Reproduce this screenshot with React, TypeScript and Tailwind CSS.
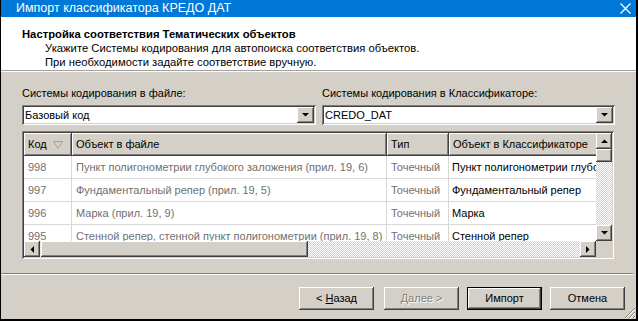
import { ReactNode } from 'react';

const raised =
  'shadow-[inset_-1px_-1px_#404040,inset_1px_1px_#ffffff,inset_-2px_-2px_#808080,inset_2px_2px_#d4d0c8]';
const sunken =
  'shadow-[inset_1px_1px_#808080,inset_-1px_-1px_#ffffff,inset_2px_2px_#404040,inset_-2px_-2px_#d4d0c8]';
const checker =
  'bg-[repeating-conic-gradient(#ffffff_0_25%,#d4d0c8_0_50%)] bg-[length:2px_2px]';

const rows = [
  {
    code: '998',
    file: 'Пункт полигонометрии глубокого заложения (прил. 19, 6)',
    type: 'Точечный',
    cls: 'Пункт полигонометрии глубокого заложения',
  },
  { code: '997', file: 'Фундаментальный репер (прил. 19, 5)', type: 'Точечный', cls: 'Фундаментальный репер' },
  { code: '996', file: 'Марка (прил. 19, 9)', type: 'Точечный', cls: 'Марка' },
  {
    code: '995',
    file: 'Стенной репер, стенной пункт полигонометрии (прил. 19, 8)',
    type: 'Точечный',
    cls: 'Стенной репер',
  },
];

function Arrow({ dir }: { dir: 'up' | 'down' | 'left' | 'right' }) {
  const pts = {
    up: '1,6 8,6 4.5,2.5',
    down: '1,2 8,2 4.5,5.5',
    left: '6,1 6,8 2.5,4.5',
    right: '2,1 2,8 5.5,4.5',
  }[dir];
  return (
    <svg width="9" height="9" viewBox="0 0 9 9">
      <polygon points={pts} fill="#000" />
    </svg>
  );
}

function ScrollBtn({ dir }: { dir: 'up' | 'down' | 'left' | 'right' }) {
  return (
    <div className={`w-[16px] h-[16px] shrink-0 bg-[#d4d0c8] flex items-center justify-center ${raised}`}>
      <Arrow dir={dir} />
    </div>
  );
}

function Combo({ value }: { value: string }) {
  return (
    <div className={`h-[20px] bg-white p-[2px] flex items-stretch ${sunken}`}>
      <div className="flex-1 pl-[1px] flex items-center">{value}</div>
      <div className={`w-[17px] bg-[#d4d0c8] flex items-center justify-center ${raised}`}>
        <Arrow dir="down" />
      </div>
    </div>
  );
}

function HeadCell({ w, children }: { w: string; children: ReactNode }) {
  return (
    <div
      className={`${w} shrink-0 h-[23px] flex items-center pl-[4px] bg-[#d4d0c8] shadow-[inset_-1px_-1px_#404040,inset_1px_1px_#ffffff,inset_-2px_-2px_#808080]`}
    >
      {children}
    </div>
  );
}

function Button({ children, def, disabled }: { children: ReactNode; def?: boolean; disabled?: boolean }) {
  return (
    <div
      className={`w-[75px] h-[23px] flex items-center justify-center bg-[#d4d0c8] ${
        def
          ? 'shadow-[inset_0_0_0_1px_#000,inset_-2px_-2px_#404040,inset_2px_2px_#ffffff,inset_-3px_-3px_#808080]'
          : raised
      } ${disabled ? 'text-[#808080] [text-shadow:1px_1px_0_#ffffff]' : ''}`}
    >
      {children}
    </div>
  );
}

export default function App() {
  return (
    <div className="w-[638px] h-[321px] flex flex-col bg-[#d4d0c8] border-l border-r-2 border-b-2 border-black font-['Liberation_Sans',Arial,sans-serif] text-[11px] text-black overflow-hidden">
      {/* title bar */}
      <div className="h-[17px] shrink-0 bg-[#0078d7] flex items-center justify-between pl-[15px] pr-[5px] text-white text-[12.5px]">
        <span>Импорт классификатора КРЕДО ДАТ</span>
        <svg width="11" height="11" viewBox="0 0 11 11">
          <path d="M0.5 0.5 L10.5 10.5 M10.5 0.5 L0.5 10.5" stroke="#fff" strokeWidth="1.2" />
        </svg>
      </div>

      {/* header */}
      <div className="h-[54px] shrink-0 bg-white border-b border-[#a0a0a0] pt-[10px] pl-[21px] leading-[14px] text-[11.25px]">
        <div className="font-bold">Настройка соответствия Тематических объектов</div>
        <div className="pl-[23px]">Укажите Системы кодирования для автопоиска соответствия объектов.</div>
        <div className="pl-[23px]">При необходимости задайте соответствие вручную.</div>
      </div>

      <div className="flex-1 flex flex-col border-t border-white relative">
        <div className="pl-[21px] pt-[14px]">
          <div className="flex gap-[6px] w-[593px]">
            <div className="w-[294px]">
              <div className="leading-[14px]">Системы кодирования в файле:</div>
              <div className="mt-[5px]">
                <Combo value="Базовый код" />
              </div>
            </div>
            <div className="w-[293px]">
              <div className="leading-[14px]">Системы кодирования в Классификаторе:</div>
              <div className="mt-[5px]">
                <Combo value="CREDO_DAT" />
              </div>
            </div>
          </div>

          {/* list */}
          <div className={`mt-[6px] w-[592px] h-[128px] p-[2px] ${sunken}`}>
            <div className="flex h-full">
              <div className="flex-1 min-w-0 flex flex-col">
                <div className="flex-1 bg-white overflow-hidden">
                  <div className="flex w-[600px]">
                    <HeadCell w="w-[48px]">
                      <span>Код</span>
                      <svg className="ml-[6px]" width="10" height="8" viewBox="0 0 10 8">
                        <polygon points="0.5,0.5 9.5,0.5 5,7.5" fill="none" stroke="#a0a0a0" />
                      </svg>
                    </HeadCell>
                    <HeadCell w="w-[315px]">Объект в файле</HeadCell>
                    <HeadCell w="w-[62px]">Тип</HeadCell>
                    <HeadCell w="w-[175px]">Объект в Классификаторе</HeadCell>
                  </div>
                  {rows.map((r) => (
                    <div key={r.code} className="flex w-[600px] h-[23px] border-b border-[#d8d8d8]">
                      <div className="w-[48px] shrink-0 pl-[4px] flex items-center text-[#707070] border-r border-[#d8d8d8]">
                        {r.code}
                      </div>
                      <div className="w-[315px] shrink-0 pl-[4px] flex items-center text-[#707070] border-r border-[#d8d8d8] whitespace-nowrap overflow-hidden">
                        {r.file}
                      </div>
                      <div className="w-[62px] shrink-0 pl-[4px] flex items-center text-[#707070] border-r border-[#d8d8d8]">
                        {r.type}
                      </div>
                      <div className="w-[175px] shrink-0 pl-[3px] flex items-center whitespace-nowrap overflow-hidden">
                        {r.cls}
                      </div>
                    </div>
                  ))}
                </div>
                {/* horizontal scrollbar */}
                <div className={`h-[16px] shrink-0 flex ${checker}`}>
                  <ScrollBtn dir="left" />
                  <div className={`w-[267px] h-[16px] bg-[#d4d0c8] ml-[1px] ${raised}`} />
                  <div className="flex-1" />
                  <ScrollBtn dir="right" />
                </div>
              </div>
              {/* vertical scrollbar */}
              <div className="w-[16px] shrink-0 flex flex-col">
                <div className={`flex-1 flex flex-col ${checker}`}>
                  <ScrollBtn dir="up" />
                  <div className={`h-[13px] w-[16px] bg-[#d4d0c8] ${raised}`} />
                  <div className="flex-1" />
                  <ScrollBtn dir="down" />
                </div>
                <div className="h-[16px] bg-[#d4d0c8]" />
              </div>
            </div>
          </div>
        </div>

        {/* separator */}
        <div className="mt-[14px] mr-[3px] h-[2px] border-t border-[#808080] border-b border-b-white" />

        {/* buttons */}
        <div className="mt-[12px] flex justify-end pr-[11px]">
          <Button>
            <span>
              &lt; <span className="underline">Н</span>азад
            </span>
          </Button>
          <div className="ml-[10px]">
            <Button disabled>
              <span>
                <span className="underline">Д</span>алее &gt;
              </span>
            </Button>
          </div>
          <div className="ml-[8px]">
            <Button def>Импорт</Button>
          </div>
          <div className="ml-[8px]">
            <Button>Отмена</Button>
          </div>
        </div>

        {/* size grip */}
        <svg className="absolute right-0 bottom-0" width="12" height="12" viewBox="0 0 12 12">
          <path d="M11 1 L1 11 M11 5 L5 11 M11 9 L9 11" stroke="#808080" strokeWidth="1" />
          <path d="M11 2 L2 11 M11 6 L6 11 M11 10 L10 11" stroke="#ffffff" strokeWidth="1" />
        </svg>
      </div>
    </div>
  );
}
